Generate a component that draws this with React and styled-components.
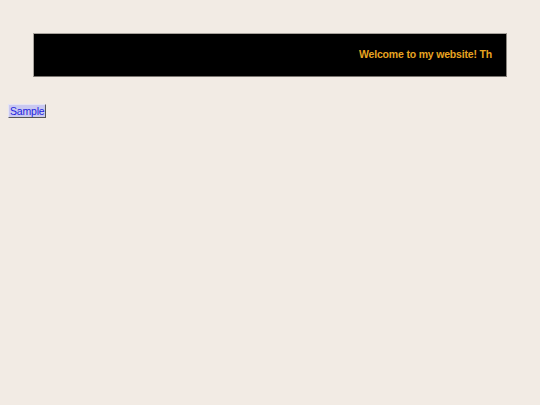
import React from "react"
import styled, { createGlobalStyle } from "styled-components"

const GlobalStyle = createGlobalStyle`
  html, body {
    margin: 0;
    background: #f2ebe4;
  }
  body {
    padding: 8px;
    font-family: "Liberation Sans", Arial, sans-serif;
  }
`

const Banner = styled.div`
  margin: 25px 25px 0;
  height: 42px;
  background: #000;
  border: 1px solid #a8a39d;
  border-bottom-color: #7a7570;
  border-right-color: #8a857f;
  display: flex;
  align-items: center;
  padding: 0 10px 0 14px;
`

const Ticker = styled.div`
  flex: 1;
  overflow: hidden;
  white-space: nowrap;
  padding-bottom: 4px;
`

const TickerText = styled.span`
  display: inline-block;
  padding-left: 311px;
  color: #e8a421;
  font-weight: bold;
  font-size: 10.5px;
  letter-spacing: -0.18px;
`

const SampleButton = styled.button`
  margin-top: 27px;
  display: block;
  padding: 0 1px;
  height: 14px;
  font-family: "Liberation Sans", Arial, sans-serif;
  font-size: 10.5px;
  line-height: 12px;
  letter-spacing: -0.2px;
  color: #2222dd;
  background: #c9c8f0;
  border: 1px solid #e6e4f4;
  border-right-color: #555;
  border-bottom-color: #555;
  border-radius: 0;
`

export default function App() {
  return (
    <>
      <GlobalStyle />
      <Banner>
        <Ticker>
          <TickerText>Welcome to my website! Th</TickerText>
        </Ticker>
      </Banner>
      <SampleButton>Sample</SampleButton>
    </>
  )
}
